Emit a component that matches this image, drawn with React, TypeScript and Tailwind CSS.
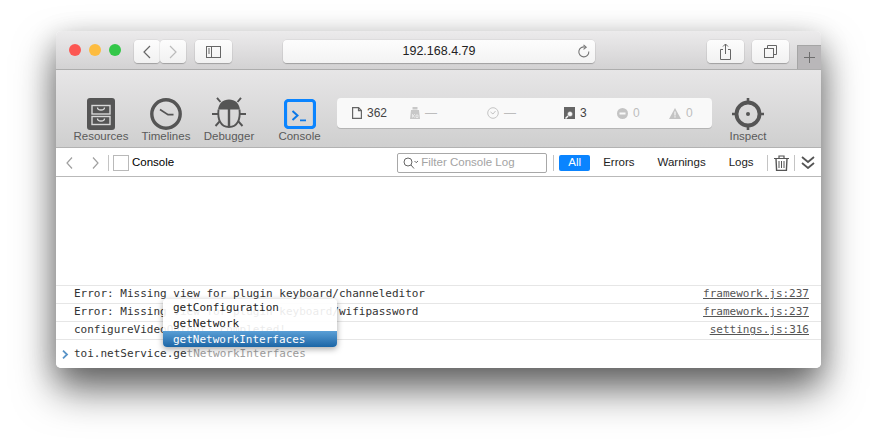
const UI = "font-['Liberation_Sans',Arial,sans-serif]";
const MONO = "font-['DejaVu_Sans_Mono',monospace]";

const LOGS = [
  { text: 'Error: Missing view for plugin keyboard/channeleditor', link: 'framework.js:237' },
  { text: 'Error: Missing view for plugin keyboard/wifipassword', link: 'framework.js:237' },
  { text: 'configureVideoOutput: completed!', link: 'settings.js:316' },
];

function ResourcesIcon() {
  return (
    <svg width="28" height="32" viewBox="0 0 28 32">
      <rect width="28" height="32" rx="3" fill="#555" />
      <rect x="5" y="7.500" width="18" height="8.500" fill="none" stroke="#d8d8d8" strokeWidth="1.400" />
      <rect x="5" y="18.500" width="18" height="8" fill="none" stroke="#d8d8d8" strokeWidth="1.400" />
      <path d="M10.500 9.500c0 2 1 2.500 3.500 2.500s3.500-.5 3.500-2.500M10.500 20.500c0 2 1 2.500 3.500 2.500s3.500-.5 3.500-2.500" fill="none" stroke="#d8d8d8" strokeWidth="1.300" />
    </svg>
  );
}

function TimelinesIcon() {
  return (
    <svg width="32" height="32" viewBox="0 0 32 32">
      <circle cx="16" cy="16" r="14.200" fill="none" stroke="#555" strokeWidth="3.400" />
      <path d="M10 11.500l8 5.200h5.500" fill="none" stroke="#555" strokeWidth="1.700" />
    </svg>
  );
}

function DebuggerIcon() {
  return (
    <svg width="34" height="33" viewBox="0 0 34 33" fill="none" stroke="#555" strokeWidth="2">
      <path d="M17 2.500c-6 0-10 3.500-11 10h22c-1-6.500-5-10-11-10z" fill="#555" stroke="none" />
      <path d="M6.500 12.500c-1 9 1.500 17.500 10.500 17.500s11.500-8.500 10.500-17.500" strokeWidth="1.900" />
      <path d="M17 12v18" strokeWidth="2.400" />
      <path d="M8.500 5L5 .8M25.500 5L29 .8M6 17H0M28 17H34M8 24l-4.500 5M26 24l4.500 5" strokeWidth="1.900" />
    </svg>
  );
}

function ConsoleIcon() {
  return (
    <svg width="32" height="30" viewBox="0 0 32 30">
      <rect x="1.500" y="1.500" width="29" height="27" rx="3" fill="none" stroke="#0a84ff" strokeWidth="3.200" />
      <path d="M8.500 12l5 4.500-5 4.500" fill="none" stroke="#0a78e8" strokeWidth="2" />
      <path d="M16 21.300h6" stroke="#0a78e8" strokeWidth="1.800" />
    </svg>
  );
}

function InspectIcon() {
  return (
    <svg width="32" height="32" viewBox="0 0 32 32" fill="none" stroke="#555">
      <circle cx="16" cy="16" r="11.500" strokeWidth="3.800" />
      <circle cx="16" cy="16" r="2" fill="#555" stroke="none" />
      <path d="M16 0v5M16 27v5M0 16h5M27 16h5" strokeWidth="2.600" />
    </svg>
  );
}

function Tab({ width, label, children }: { width: string; label: string; children: React.ReactNode }) {
  return (
    <div className={`${width} shrink-0 flex flex-col items-center`}>
      <div className="h-[33px] flex items-center justify-center">{children}</div>
      <span className="text-[11.500px] leading-[14px] mt-[-1px] text-[#5a5a5a]">{label}</span>
    </div>
  );
}

function Stat({ width, icon, value, dim }: { width: string; icon: React.ReactNode; value: string; dim?: boolean }) {
  return (
    <div className={`${width} shrink-0 flex items-center gap-[5px]`}>
      {icon}
      <span className={`text-[12px] ${dim ? 'text-[#bdbdbd]' : 'text-[#444]'}`}>{value}</span>
    </div>
  );
}

function ToolButton({ width, children }: { width: string; children: React.ReactNode }) {
  return (
    <div className={`${width} h-[23px] shrink-0 flex items-center justify-center rounded-[4px] bg-gradient-to-b from-[#fdfdfd] to-[#f1f1f1] shadow-[0_1px_1px_rgba(0,0,0,0.22),0_0_0_0.5px_rgba(0,0,0,0.08)]`}>
      {children}
    </div>
  );
}

export default function App() {
  return (
    <div className={`${UI} w-[877px] h-[448px] bg-white overflow-hidden pt-[31px] pl-[56px]`}>
      <div className="w-[765px] h-[337px] flex flex-col rounded-[5px] overflow-hidden bg-white shadow-[0_22px_40px_rgba(0,0,0,0.55),0_8px_28px_rgba(0,0,0,0.22)]">
        {/* Title bar */}
        <div className="h-[39px] shrink-0 flex items-start pt-[9px] pl-[13px] relative bg-gradient-to-b from-[#ecebec] to-[#d3d2d3] border-b border-[#adadad]">
          <div className="flex gap-[8px] mt-[4px]">
            <div className="w-[12px] h-[12px] rounded-full bg-[#fc5753]" />
            <div className="w-[12px] h-[12px] rounded-full bg-[#fdbc40]" />
            <div className="w-[12px] h-[12px] rounded-full bg-[#33c748]" />
          </div>
          <div className="flex ml-[13px]">
            <ToolButton width="w-[26px]">
              <svg width="10" height="14" viewBox="0 0 10 14" fill="none" stroke="#666" strokeWidth="1.200"><path d="M8 1L2 7l6 6" /></svg>
            </ToolButton>
            <ToolButton width="w-[26px]">
              <svg width="10" height="14" viewBox="0 0 10 14" fill="none" stroke="#bbb" strokeWidth="1.200"><path d="M2 1l6 6-6 6" /></svg>
            </ToolButton>
          </div>
          <div className="ml-[9px]">
            <ToolButton width="w-[37px]">
              <svg width="15" height="12" viewBox="0 0 15 12" fill="none" stroke="#666"><rect x=".5" y=".5" width="14" height="11" /><path d="M5.500 .5v11M2 3h2M2 5h2M2 7h2" /></svg>
            </ToolButton>
          </div>
          <div className="ml-[51px] w-[312px] h-[23px] shrink-0 relative flex items-center justify-center rounded-[4px] bg-gradient-to-b from-[#fdfdfd] to-[#f3f3f3] shadow-[0_1px_1px_rgba(0,0,0,0.22),0_0_0_0.5px_rgba(0,0,0,0.08)]">
            <span className="text-[12.500px] text-[#222]">192.168.4.79</span>
            <svg className="absolute right-[5px] top-[4px]" width="13" height="14" viewBox="0 0 13 14" fill="none" stroke="#777" strokeWidth="1.100">
              <path d="M8.500 3.200a5 5 0 1 0 3.300 4.300" />
              <path d="M6.500 .8l2.700 2.400-2.700 2.200" />
            </svg>
          </div>
          <div className="ml-[112px]">
            <ToolButton width="w-[37px]">
              <svg width="13" height="17" viewBox="0 0 13 17" fill="none" stroke="#666"><path d="M4 6.500H1.500v10h10v-10H9M6.500 11V1M4 3.500L6.500 1 9 3.500" /></svg>
            </ToolButton>
          </div>
          <div className="ml-[8px]">
            <ToolButton width="w-[37px]">
              <svg width="13" height="13" viewBox="0 0 13 13" fill="none" stroke="#666"><path d="M3.500 3V.5h9v9H10" /><rect x=".5" y="3.500" width="9" height="9" /></svg>
            </ToolButton>
          </div>
          {/* Tab bar plus */}
          <div className="absolute right-0 bottom-0 w-[24px] h-[24px] flex items-center justify-center bg-[#b9b7b9] border-l border-t border-[#a5a5a5]">
            <svg width="11" height="11" viewBox="0 0 11 11" stroke="#6e6e6e"><path d="M5.500 0v11M0 5.500h11" /></svg>
          </div>
        </div>

        {/* Inspector toolbar */}
        <div className="h-[78px] shrink-0 flex items-start pt-[27px] pl-[10px] bg-gradient-to-b from-[#e7e6e7] to-[#cfcfcf] border-b border-[#b2b2b2]">
          <Tab width="w-[70px]" label="Resources"><ResourcesIcon /></Tab>
          <Tab width="w-[60px]" label="Timelines"><TimelinesIcon /></Tab>
          <Tab width="w-[66px]" label="Debugger"><DebuggerIcon /></Tab>
          <Tab width="w-[75px]" label="Console"><ConsoleIcon /></Tab>
          <div className="w-[375px] h-[30px] mt-[1px] shrink-0 flex items-center pl-[15px] rounded-[4px] bg-[#f9f9f9] shadow-[0_1px_0_rgba(0,0,0,0.15)]">
            <Stat width="w-[58px]" value="362" icon={
              <svg width="10" height="12" viewBox="0 0 10 12" fill="none" stroke="#666" strokeWidth="1.200"><path d="M.6 .6h5.900l2.900 3v7.800H.6z" /><path d="M6.500 .6v3h2.900" /></svg>
            } />
            <Stat width="w-[77px]" value="—" dim icon={
              <svg width="10" height="12" viewBox="0 0 10 12"><path d="M2.500 0h5v2.500h-5zM1 3h8l1 9H0z" fill="#c8c8c8" /><path d="M2.500 7v3.500M5 7L3 9l2 1.500M6 8h2v2.500H6z" fill="none" stroke="#f4f4f4" strokeWidth=".7" /></svg>
            } />
            <Stat width="w-[77px]" value="—" dim icon={
              <svg width="12" height="12" viewBox="0 0 12 12" fill="none" stroke="#c4c4c4"><circle cx="6" cy="6" r="5.300" /><path d="M3.500 5l2.500 2 2.500-3" /></svg>
            } />
            <Stat width="w-[53px]" value="3" icon={
              <svg width="11" height="12" viewBox="0 0 11 12"><rect width="11" height="12" fill="#666" /><circle cx="6" cy="7" r="2.500" fill="#f9f9f9" stroke="#666" strokeWidth=".4" /><path d="M4 9L1.500 11.500" stroke="#f9f9f9" strokeWidth="1.500" /></svg>
            } />
            <Stat width="w-[52px]" value="0" dim icon={
              <svg width="11" height="11" viewBox="0 0 11 11"><circle cx="5.500" cy="5.500" r="5.500" fill="#c4c4c4" /><rect x="2.500" y="4.500" width="6" height="2" fill="#f9f9f9" /></svg>
            } />
            <Stat width="w-[40px]" value="0" dim icon={
              <svg width="12" height="11" viewBox="0 0 12 11"><path d="M6 0l6 11H0z" fill="#c4c4c4" /><path d="M5.400 3.500h1.200v4H5.400zM5.400 8.300h1.200v1.200H5.400z" fill="#f9f9f9" /></svg>
            } />
          </div>
          <Tab width="w-[72px]" label="Inspect"><InspectIcon /></Tab>
        </div>

        {/* Filter bar */}
        <div className="h-[29px] shrink-0 flex items-center pt-px bg-white border-b border-[#b9b9b9] text-[11.500px] text-[#222]">
          <svg className="ml-[10px]" width="7" height="12" viewBox="0 0 7 12" fill="none" stroke="#a0a0a0" strokeWidth="1.200"><path d="M6 .5L1 6l5 5.500" /></svg>
          <svg className="ml-[19px]" width="7" height="12" viewBox="0 0 7 12" fill="none" stroke="#a0a0a0" strokeWidth="1.200"><path d="M1 .5L6 6l-5 5.500" /></svg>
          <div className="ml-[9px] w-px h-[16px] bg-[#c4c4c4]" />
          <div className="ml-[4px] w-[16px] h-[16px] border border-[#b9b9b9]" />
          <span className="ml-[3px] text-black">Console</span>
          <div className="ml-[223px] w-[150px] h-[20px] shrink-0 flex items-center pl-[5px] border border-[#a8a8a8] rounded-[2px]">
            <svg width="16" height="12" viewBox="0 0 16 12" fill="none" stroke="#666"><circle cx="5" cy="5" r="4" /><path d="M8 8l3 3.500" /><path d="M11.500 4l1.700 1.700L15 4" /></svg>
            <span className="ml-[2px] text-[#a3a3a3]">Filter Console Log</span>
          </div>
          <div className="ml-[6px] w-px h-[16px] bg-[#c4c4c4]" />
          <div className="ml-[5px] w-[31px] h-[16px] flex items-center justify-center rounded-[2px] bg-[#0a84ff] text-white">All</div>
          <span className="ml-[13px]">Errors</span>
          <span className="ml-[23px]">Warnings</span>
          <span className="ml-[23px]">Logs</span>
          <div className="ml-[13px] w-px h-[16px] bg-[#c4c4c4]" />
          <svg className="ml-[6px]" width="15" height="16" viewBox="0 0 15 16" fill="none" stroke="#555"><path d="M0 3.500h15M5 3V1h5v2" strokeWidth="1.200" /><path d="M2 3.500l.6 12h9.800l.6-12" strokeWidth="1.400" /><path d="M5 6v7M7.500 6v7M10 6v7" /></svg>
          <div className="ml-[5px] w-px h-[16px] bg-[#c4c4c4]" />
          <svg className="ml-[6px]" width="14" height="13" viewBox="0 0 14 13" fill="none" stroke="#555" strokeWidth="1.800"><path d="M1 1l6 5 6-5M1 7l6 5 6-5" /></svg>
        </div>

        {/* Console log */}
        <div className={`${MONO} relative flex-1 flex flex-col text-[11px] text-[#333] bg-white`}>
          <div className="h-[109px] shrink-0 border-b border-[#e6e6e6]" />
          {LOGS.map((log) => (
            <div key={log.text} className="h-[18px] shrink-0 flex items-center justify-between pl-[18px] pr-[12px] border-b border-[#e6e6e6]">
              <span>{log.text}</span>
              <span className="underline text-[#555]">{log.link}</span>
            </div>
          ))}
          <div className="flex items-center h-[28px] pl-[6px]">
            <svg width="7" height="9" viewBox="0 0 7 9" fill="none" stroke="#5a94c8" strokeWidth="1.800"><path d="M1 .7l4 3.800-4 3.800" /></svg>
            <span className="ml-[5px] whitespace-pre">toi.netService.ge<span className="text-[#a0a0a0]">tNetworkInterfaces</span></span>
          </div>

          {/* Autocomplete popup */}
          <div className="absolute left-[107px] top-[122px] w-[174px] h-[48px] flex flex-col rounded-[4px] overflow-hidden bg-white/90 text-[#222] shadow-[0_2px_6px_rgba(0,0,0,0.35)]">
            <div className="h-[16px] pl-[10px] leading-[18px]">getConfiguration</div>
            <div className="h-[16px] pl-[10px] leading-[18px]">getNetwork</div>
            <div className="h-[16px] pl-[10px] leading-[18px] text-white bg-gradient-to-b from-[#5a9fd6] to-[#1a66a6]">getNetworkInterfaces</div>
          </div>
        </div>
      </div>
    </div>
  );
}
